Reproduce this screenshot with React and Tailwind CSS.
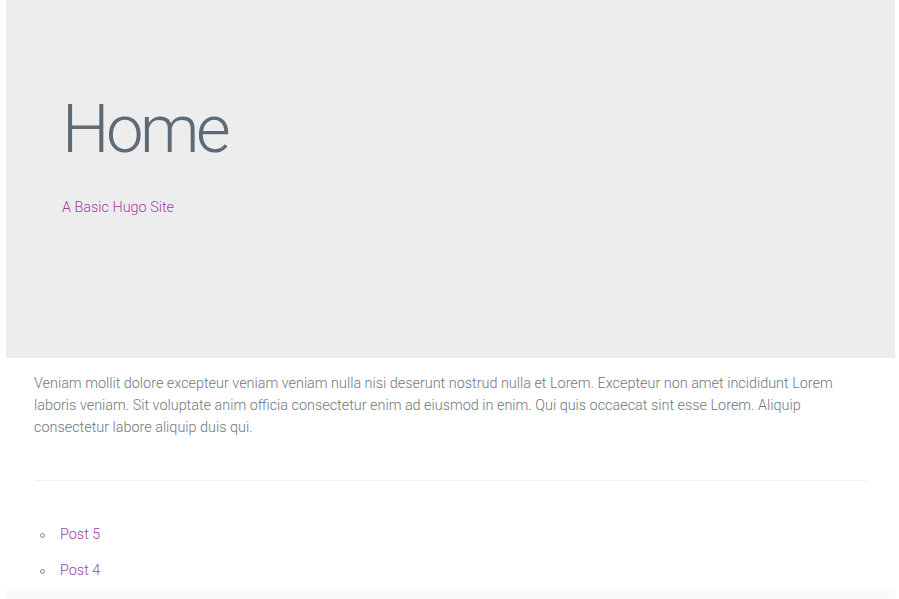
export default function App() {
  return (
    <div className="min-h-[599px] bg-white font-['Roboto',sans-serif] font-light">
      <div className="ml-[6px] mr-[4px]">
        {/* hero */}
        <header className="h-[358px] bg-[#ededed] px-[56px] pt-[89px]">
          <h1 className="text-[67px] leading-[80px] tracking-[-3.5px] text-[#5d6b78] font-light">Home</h1>
          <p className="mt-[29px] text-[14.4px] leading-[20px] text-[#a33ea1]">A Basic Hugo Site</p>
        </header>

        <main className="px-[28px]">
          <p className="mt-[15px] text-[14.4px] leading-[22px] text-[#6f777f]">
            Veniam mollit dolore excepteur veniam veniam nulla nisi deserunt nostrud nulla et Lorem. Excepteur non amet incididunt Lorem
            laboris veniam. Sit voluptate anim officia consectetur enim ad eiusmod in enim. Qui quis occaecat sint esse Lorem. Aliquip
            consectetur labore aliquip duis qui.
          </p>
          <hr className="mt-[41px] border-t border-[#f0f0f0]" />
          <ul className="mt-[44px] text-[14.4px] leading-[20px]">
            {['Post 5', 'Post 4'].map((t) => (
              <li key={t} className="mb-[16px] flex items-center">
                <span className="ml-[6px] mr-[15px] h-[5px] w-[5px] rounded-full border-[1.5px] border-[#7a8591]" />
                <a href="#" className="text-[#a33ea1]">{t}</a>
              </li>
            ))}
          </ul>
        </main>
        <div className="-mt-[8px] h-[20px] bg-[#fafafa]" />
      </div>
    </div>
  );
}
